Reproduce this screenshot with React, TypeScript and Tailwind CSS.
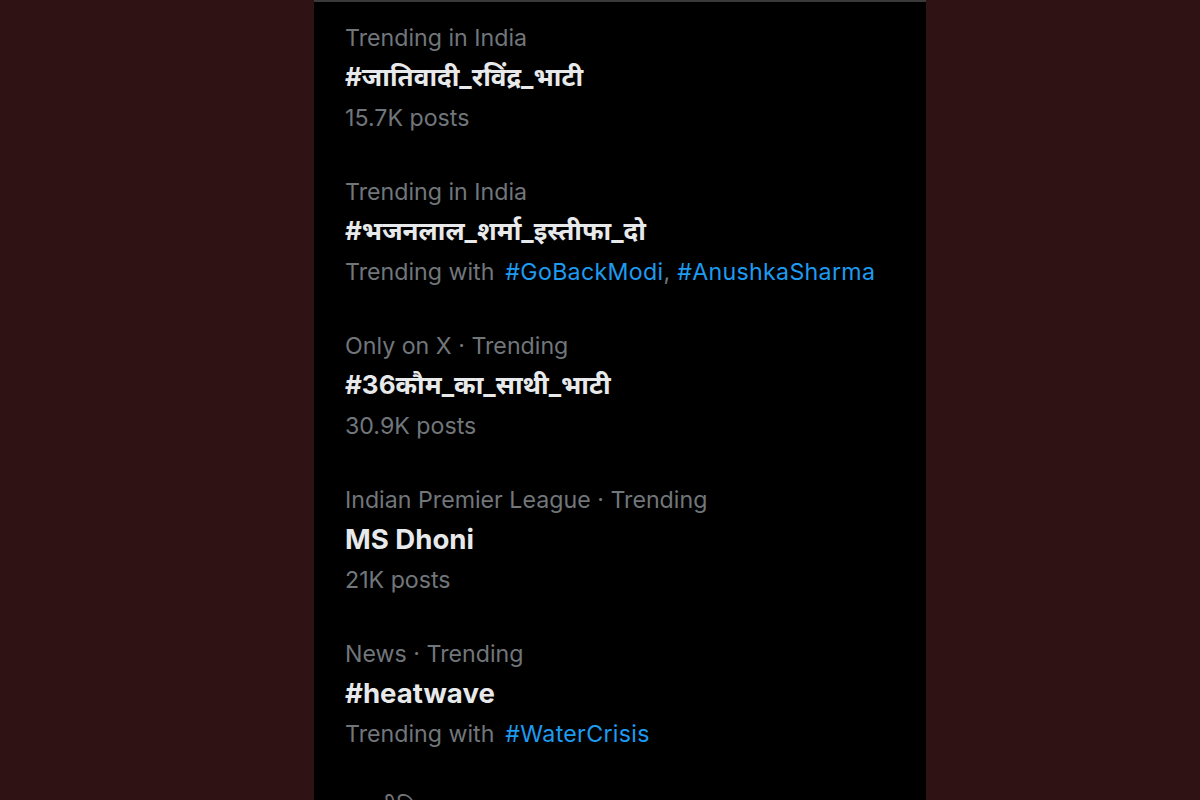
import React from 'react'

interface Trend {
  label: string
  title: string
  latin?: boolean
  posts?: string
  with?: string[]
}

const trends: Trend[] = [
  { label: 'Trending in India', title: '#जातिवादी_रविंद्र_भाटी', posts: '15.7K posts' },
  { label: 'Trending in India', title: '#भजनलाल_शर्मा_इस्तीफा_दो', with: ['#GoBackModi', '#AnushkaSharma'] },
  { label: 'Only on X · Trending', title: '#36कौम_का_साथी_भाटी', posts: '30.9K posts' },
  { label: 'Indian Premier League · Trending', title: 'MS Dhoni', latin: true, posts: '21K posts' },
  { label: 'News · Trending', title: '#heatwave', latin: true, with: ['#WaterCrisis'] },
  { label: 'राजनीति', title: '#Rajasthan', latin: true, posts: '12K posts' },
]

const font = { fontFamily: 'Inter, "Noto Sans", "Noto Sans Devanagari", "Lohit Devanagari", sans-serif' }

export default function App() {
  return (
    <div className="h-[800px] w-[1200px] overflow-hidden bg-[#2e1214] flex" style={font}>
      <div className="ml-[314px] w-[612px] h-full bg-black border-t-2 border-[#3a3a3a] pl-[31px] pt-[21px]">
        <div className="flex flex-col gap-[44px]">
          {trends.map((t, i) => (
            <div key={i} className="flex flex-col">
              <div className="text-[23.2px] leading-[30px] text-[#71767b]">{t.label}</div>
              <div
                className={
                  t.latin
                    ? 'mt-[9px] text-[27.6px] leading-[30px] font-bold text-[#e7e9ea]'
                    : 'mt-[9px] text-[26px] leading-[30px] font-bold text-[#e7e9ea]'
                }
              >
                {t.title}
              </div>
              <div className="mt-[11px] text-[23.2px] leading-[30px] text-[#71767b]">
                {t.posts}
                {t.with && (
                  <>
                    Trending with
                    <span className="ml-[11px] text-[#1d9bf0] tracking-[0.3px]">
                      {t.with.map((w, j) => (
                        <React.Fragment key={w}>
                          {j > 0 && <span className="text-[#71767b]">, </span>}
                          {w}
                        </React.Fragment>
                      ))}
                    </span>
                  </>
                )}
              </div>
            </div>
          ))}
        </div>
      </div>
    </div>
  )
}
